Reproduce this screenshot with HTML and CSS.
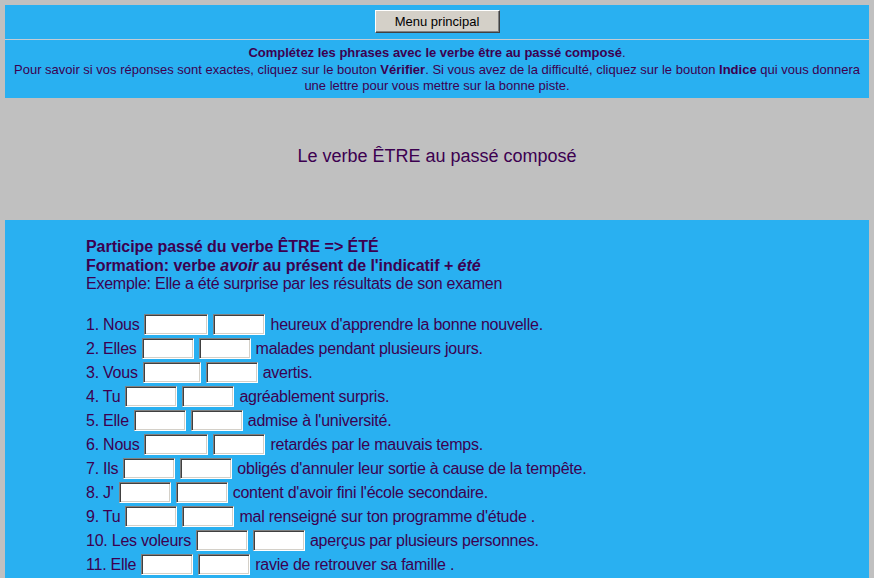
FILE: index.html
```html
<!DOCTYPE html>
<html lang="fr">
<head>
<meta charset="utf-8">
<title>Le verbe ÊTRE au passé composé</title>
<link rel="stylesheet" href="styles.css">
</head>
<body>
<div class="top">
  <div class="menu-row">
    <button class="btn" type="button">Menu principal</button>
  </div>
  <div class="instructions">
    <b>Complétez les phrases avec le verbe être au passé composé</b>.<br>
    Pour savoir si vos réponses sont exactes, cliquez sur le bouton <b>Vérifier</b>. Si vous avez de la difficulté, cliquez sur le bouton <b>Indice</b> qui vous donnera une lettre pour vous mettre sur la bonne piste.
  </div>
</div>

<div class="title-band">
  <div class="title">Le verbe ÊTRE au passé composé</div>
</div>

<div class="exercise">
  <div class="intro">
    <div class="b">Participe passé du verbe ÊTRE =&gt; ÉTÉ</div>
    <div class="b">Formation: verbe <i>avoir</i> au présent de l'indicatif + <i>été</i></div>
    <div>Exemple: Elle a été surprise par les résultats de son examen</div>
  </div>
  <div class="rows">
    <div class="row"><span>1. Nous</span><input class="w64"><input class="w52"><span>heureux d'apprendre la bonne nouvelle.</span></div>
    <div class="row"><span>2. Elles</span><input class="w52"><input class="w52"><span>malades pendant plusieurs jours.</span></div>
    <div class="row"><span>3. Vous</span><input class="w58"><input class="w52"><span>avertis.</span></div>
    <div class="row"><span>4. Tu</span><input class="w52"><input class="w52"><span>agréablement surpris.</span></div>
    <div class="row"><span>5. Elle</span><input class="w52"><input class="w52"><span>admise à l'université.</span></div>
    <div class="row"><span>6. Nous</span><input class="w64"><input class="w52"><span>retardés par le mauvais temps.</span></div>
    <div class="row"><span>7. Ils</span><input class="w52"><input class="w52"><span>obligés d'annuler leur sortie à cause de la tempête.</span></div>
    <div class="row"><span>8. J'</span><input class="w52"><input class="w52"><span>content d'avoir fini l'école secondaire.</span></div>
    <div class="row"><span>9. Tu</span><input class="w52"><input class="w52"><span>mal renseigné sur ton programme d'étude .</span></div>
    <div class="row"><span>10. Les voleurs</span><input class="w52"><input class="w52"><span>aperçus par plusieurs personnes.</span></div>
    <div class="row"><span>11. Elle</span><input class="w52"><input class="w52"><span>ravie de retrouver sa famille .</span></div>
    <div class="row"><span>12. Elles</span><input class="w52"><input class="w52"><span>satisfaites de leur travail.</span></div>
  </div>
</div>
</body>
</html>
```

FILE: styles.css
```css
html {
  scrollbar-width: none;
}
body {
  margin: 5px;
  background: #c0c0c0;
  font-family: "Liberation Sans", Arial, sans-serif;
  color: #3c0050;
}
.top {
  background: #29b0f1;
}
.menu-row {
  display: flex;
  justify-content: center;
  padding: 5px 0 6px;
  border-bottom: 1px solid #c4ccd4;
}
.btn {
  width: 125px;
  height: 23px;
  margin: 0;
  padding: 0;
  font-family: "Liberation Sans", Arial, sans-serif;
  font-size: 13px;
  color: #000;
  background: #d4d0c8;
  border: 1px solid;
  border-color: #ffffff #404040 #404040 #ffffff;
  box-shadow: inset -1px -1px 0 #808080;
}
.instructions {
  padding: 5px 5px 3.5px;
  font-size: 13px;
  line-height: 16.5px;
  text-align: center;
}
.title-band {
  height: 122px;
  box-sizing: border-box;
  padding-top: 48px;
  text-align: center;
}
.title {
  font-size: 18px;
}
.exercise {
  background: #29b0f1;
  padding: 18px 0 20px 81px;
  font-size: 16px;
  letter-spacing: -0.24px;
}
.intro {
  line-height: 18.5px;
  margin-bottom: 19px;
}
.b {
  font-weight: bold;
  letter-spacing: -0.05px;
}
.row {
  display: flex;
  align-items: center;
  gap: 5px;
  height: 24px;
  white-space: nowrap;
}
.row input {
  height: 21px;
  box-sizing: border-box;
  margin: 0;
  padding: 0 2px;
  background: #fff;
  border: 1px solid;
  border-color: #808080 #ffffff #ffffff #808080;
  box-shadow: inset 1px 1px 0 #404040, inset -1px -1px 0 #d4d0c8;
  font-size: 13px;
}
.w52 { width: 52px; }
.w58 { width: 58px; }
.w64 { width: 64px; }
```
